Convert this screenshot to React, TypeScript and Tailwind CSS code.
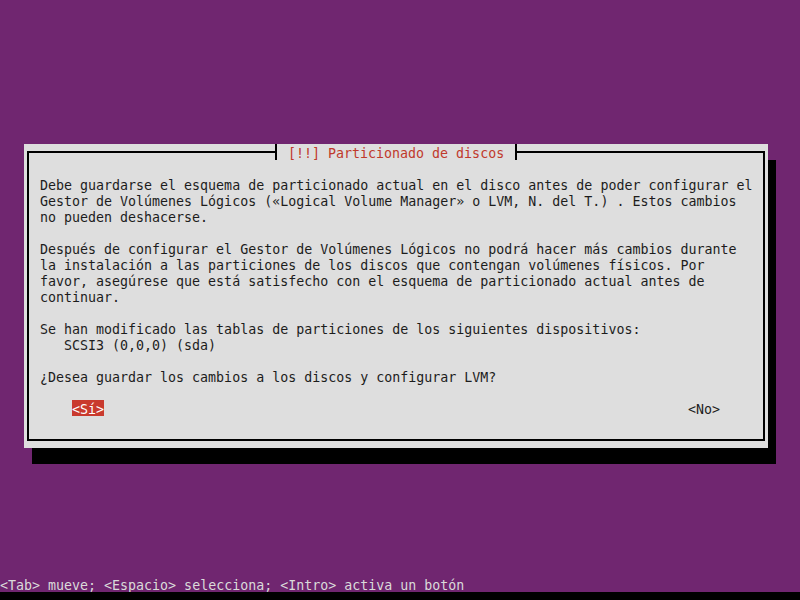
import React from "react";

const lines = [
  "Debe guardarse el esquema de particionado actual en el disco antes de poder configurar el",
  "Gestor de Volúmenes Lógicos («Logical Volume Manager» o LVM, N. del T.) . Estos cambios",
  "no pueden deshacerse.",
  "",
  "Después de configurar el Gestor de Volúmenes Lógicos no podrá hacer más cambios durante",
  "la instalación a las particiones de los discos que contengan volúmenes físicos. Por",
  "favor, asegúrese que está satisfecho con el esquema de particionado actual antes de",
  "continuar.",
  "",
  "Se han modificado las tablas de particiones de los siguientes dispositivos:",
  "   SCSI3 (0,0,0) (sda)",
  "",
  "¿Desea guardar los cambios a los discos y configurar LVM?",
  "",
];

function TeeLeft() {
  return (
    <div className="relative w-[8px] h-[16px]">
      <div className="absolute right-0 top-0 w-[4px] h-full bg-[#dedede]" />
      <div className="absolute left-[3px] top-0 w-[2px] h-full bg-black" />
    </div>
  );
}

function TeeRight() {
  return (
    <div className="relative w-[8px] h-[16px]">
      <div className="absolute left-0 top-0 w-[4px] h-full bg-[#dedede]" />
      <div className="absolute left-[3px] top-0 w-[2px] h-full bg-black" />
    </div>
  );
}

export default function App() {
  return (
    <div className="w-[800px] h-[600px] bg-[#702670] flex flex-col overflow-hidden font-['DejaVu_Sans_Mono',monospace] text-[13.3px] leading-[20px]">
      <div className="mt-[144px] ml-[24px] w-[744px] h-[304px] bg-[#dedede] shadow-[8px_16px_0_0_#000] relative flex">
        <div className="flex-1 mx-[3px] my-[7px] border-2 border-black pl-[11px] pt-[23px] text-[#1c1c1c]">
          {lines.map((l, i) => (
            <div key={i} className="h-[16px] whitespace-pre">
              {l}
            </div>
          ))}
          <div className="h-[16px] flex whitespace-pre">
            <span className="ml-[32px] h-[16px] overflow-hidden bg-[#c93a2e] text-white">{"<Sí>"}</span>
            <span className="ml-[584px] h-[16px]">{"<No>"}</span>
          </div>
        </div>
        <div className="absolute left-[248px] top-0 h-[16px] flex">
          <TeeLeft />
          <div className="w-[232px] h-[16px] bg-[#dedede] px-[8px] whitespace-pre text-[#c0392b]">
            [!!] Particionado de discos
          </div>
          <TeeRight />
        </div>
      </div>
      <div className="mt-[128px] h-[16px] whitespace-pre text-[#dadada]">
        {"<Tab> mueve; <Espacio> selecciona; <Intro> activa un botón"}
      </div>
      <div className="h-[8px] bg-black" />
    </div>
  );
}
